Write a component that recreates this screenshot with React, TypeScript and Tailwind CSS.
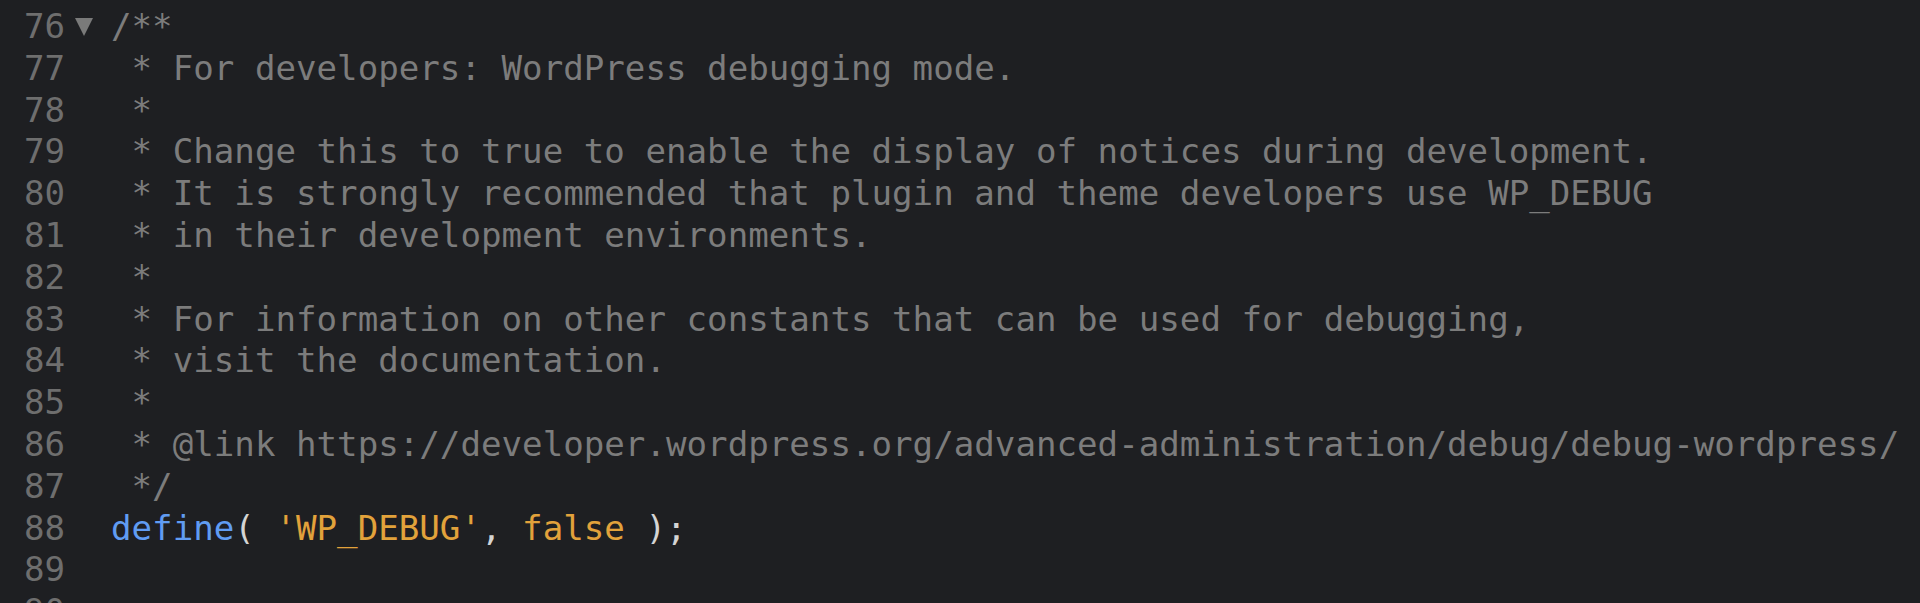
import React from "react";

type Token = { text: string; color?: string };

const COMMENT = "text-[#7c7c7c]";

const lines: { num: number; fold?: boolean; tokens: Token[] }[] = [
  { num: 76, fold: true, tokens: [{ text: "/**", color: COMMENT }] },
  { num: 77, tokens: [{ text: " * For developers: WordPress debugging mode.", color: COMMENT }] },
  { num: 78, tokens: [{ text: " *", color: COMMENT }] },
  {
    num: 79,
    tokens: [
      {
        text: " * Change this to true to enable the display of notices during development.",
        color: COMMENT,
      },
    ],
  },
  {
    num: 80,
    tokens: [
      {
        text: " * It is strongly recommended that plugin and theme developers use WP_DEBUG",
        color: COMMENT,
      },
    ],
  },
  { num: 81, tokens: [{ text: " * in their development environments.", color: COMMENT }] },
  { num: 82, tokens: [{ text: " *", color: COMMENT }] },
  {
    num: 83,
    tokens: [
      {
        text: " * For information on other constants that can be used for debugging,",
        color: COMMENT,
      },
    ],
  },
  { num: 84, tokens: [{ text: " * visit the documentation.", color: COMMENT }] },
  { num: 85, tokens: [{ text: " *", color: COMMENT }] },
  {
    num: 86,
    tokens: [
      {
        text: " * @link https://developer.wordpress.org/advanced-administration/debug/debug-wordpress/",
        color: COMMENT,
      },
    ],
  },
  { num: 87, tokens: [{ text: " */", color: COMMENT }] },
  {
    num: 88,
    tokens: [
      { text: "define", color: "text-[#609cf2]" },
      { text: "( ", color: "text-[#d4d4d4]" },
      { text: "'WP_DEBUG'", color: "text-[#e2a23b]" },
      { text: ", ", color: "text-[#d4d4d4]" },
      { text: "false", color: "text-[#e2a23b]" },
      { text: " );", color: "text-[#d4d4d4]" },
    ],
  },
  { num: 89, tokens: [] },
  { num: 90, tokens: [] },
];

// fold marker next to the doc-block start
function FoldArrow() {
  return (
    <svg
      width="18"
      height="18"
      viewBox="0 0 18 18"
      className="mt-[12px] h-[18px] w-[18px] shrink-0 self-start"
    >
      <polygon points="0,0 18,0 9,18" fill="#7a7a7a" />
    </svg>
  );
}

export default function App() {
  return (
    <div
      className="h-[603px] w-full overflow-hidden bg-[#1e1f22] pt-[6px] text-[34.15px] leading-[41.8px] whitespace-pre"
      style={{ fontFamily: '"DejaVu Sans Mono", monospace' }}
    >
      {lines.map((line) => (
        <div key={line.num} className="flex h-[41.8px] items-center">
          <div className="flex h-full w-[111px] shrink-0 items-center">
            <span className="w-[75px] pl-[24px] text-[#6e6e6e]">{line.num}</span>
            {line.fold && <FoldArrow />}
          </div>
          <div>
            {line.tokens.map((t, i) => (
              <span key={i} className={t.color}>
                {t.text}
              </span>
            ))}
          </div>
        </div>
      ))}
    </div>
  );
}
